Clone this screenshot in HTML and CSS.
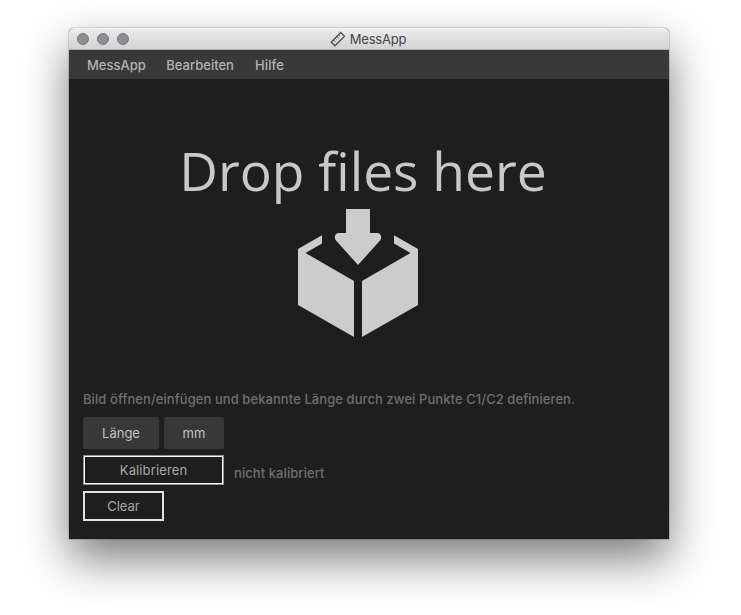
FILE: index.html
```html
<!DOCTYPE html>
<html lang="de">
<head>
<meta charset="utf-8">
<title>MessApp</title>
<link rel="stylesheet" href="styles.css">
</head>
<body>
<main class="window">
  <header class="titlebar">
    <div class="lights"><i></i><i></i><i></i></div>
    <div class="title">
      <svg class="ruler" viewBox="0 0 16 16" width="16" height="16" fill="none" stroke="#505050">
        <path d="M1.2 11.2 10.7 1.500 14.500 5.200 5 14.800Z" stroke-width="1.3"/>
        <path d="m3.500 9 1.700 1.700m0-3.400 1.200 1.200m.6-2.800 1.700 1.700m0-3.400 1.200 1.200" stroke-width="1"/>
      </svg>
      <span class="title-text">MessApp</span>
    </div>
  </header>
  <nav class="menubar">
    <span class="menu-app">MessApp</span>
    <span class="menu-edit">Bearbeiten</span>
    <span class="menu-help">Hilfe</span>
  </nav>
  <section class="drop">
    <h1>Drop files here</h1>
    <svg class="box" width="120" height="128" viewBox="0 0 120 128" fill="#ccc">
      <path d="M48 0H72V24H79C83 24 84.500 28.500 82 31.500L60 56 38 31.500C35.500 28.500 37 24 41 24H48Z"/>
      <path d="M0 40 24 26.300V34.500L7.500 44 56 72V128L0 96Z"/>
      <path d="M120 40 96 26.300V34.500L112.500 44 64 72V128L120 96Z"/>
    </svg>
  </section>
  <section class="controls">
    <p class="hint">Bild öffnen/einfügen und bekannte Länge durch zwei Punkte C1/C2 definieren.</p>
    <div class="fields">
      <span class="field length">Länge</span>
      <span class="field unit">mm</span>
    </div>
    <div class="calibration">
      <button class="calibrate">Kalibrieren</button>
      <span class="status">nicht kalibriert</span>
    </div>
    <button class="clear">Clear</button>
  </section>
</main>
</body>
</html>
```
FILE: styles.css
```css
* { box-sizing: border-box; }
body {
  margin: 0;
  height: 615px;
  overflow: hidden;
  padding: 28px 0 0 69px;
  background: #fff;
  font: 13px/16px Inter, "Liberation Sans", sans-serif;
}
.window {
  width: 600px;
  height: 511px;
  background: #1e1e1e;
  border-radius: 5px 5px 0 0;
  box-shadow: 0 0 0 1px rgba(0, 0, 0, .13), 0 20px 46px rgba(0, 0, 0, .52);
}
.titlebar {
  position: relative;
  display: flex;
  align-items: center;
  justify-content: center;
  height: 22px;
  background: linear-gradient(#ebebeb, #d3d3d3);
  border-top: 1px solid #f6f6f6;
  border-bottom: 1px solid #b1b1b1;
  border-radius: 5px 5px 0 0;
}
.lights { position: absolute; left: 8px; top: 4px; display: flex; gap: 8px; }
.lights i {
  width: 12px;
  height: 12px;
  border: 1px solid #77767b;
  border-radius: 50%;
  background: #8e8d93;
}
.title { display: flex; align-items: center; gap: 4px; margin-right: 2px; color: #464646; }
.title-text { letter-spacing: -.2px; }
.ruler { display: block; }
.menubar {
  display: flex;
  align-items: center;
  gap: 20.500px;
  height: 29px;
  padding-left: 18px;
  background: #393939;
  color: #b4b4b4;
  font-weight: 500;
}
.menu-help { margin-left: .5px; letter-spacing: .15px; }
.drop {
  display: flex;
  flex-direction: column;
  align-items: center;
  height: 312px;
  padding: 57px 22px 0 0;
}
h1 {
  margin: -2px -10px 2px 0;
  height: 73px;
  color: #c8c8c8;
  font: 400 53.333px/73px "Open Sans", "Noto Sans", sans-serif;
  white-space: nowrap;
}
.box { display: block; }
.controls { padding-left: 14px; color: #707070; }
.hint { margin: 0 0 10px; font-weight: 500; letter-spacing: .075px; white-space: nowrap; }
.fields { display: flex; gap: 5px; }
.field {
  height: 32px;
  border-radius: 2px;
  background: #383838;
  color: #c2c2c2;
  line-height: 32px;
  text-align: center;
}
.length { width: 76px; }
.unit { width: 60px; }
.calibration { display: flex; gap: 10px; margin-top: 6px; }
button {
  display: block;
  height: 30px;
  padding: 0;
  background: transparent;
  color: #a8a8a8;
  font: inherit;
}
.calibrate {
  width: 141px;
  border: 1px solid #929292;
  box-shadow: inset 0 0 0 1px #fff;
  letter-spacing: .12px;
}
.status { padding-top: 10px; font-weight: 500; letter-spacing: .075px; }
.clear { width: 81px; margin-top: 6px; border: 2px solid #e0e4e0; }
```
